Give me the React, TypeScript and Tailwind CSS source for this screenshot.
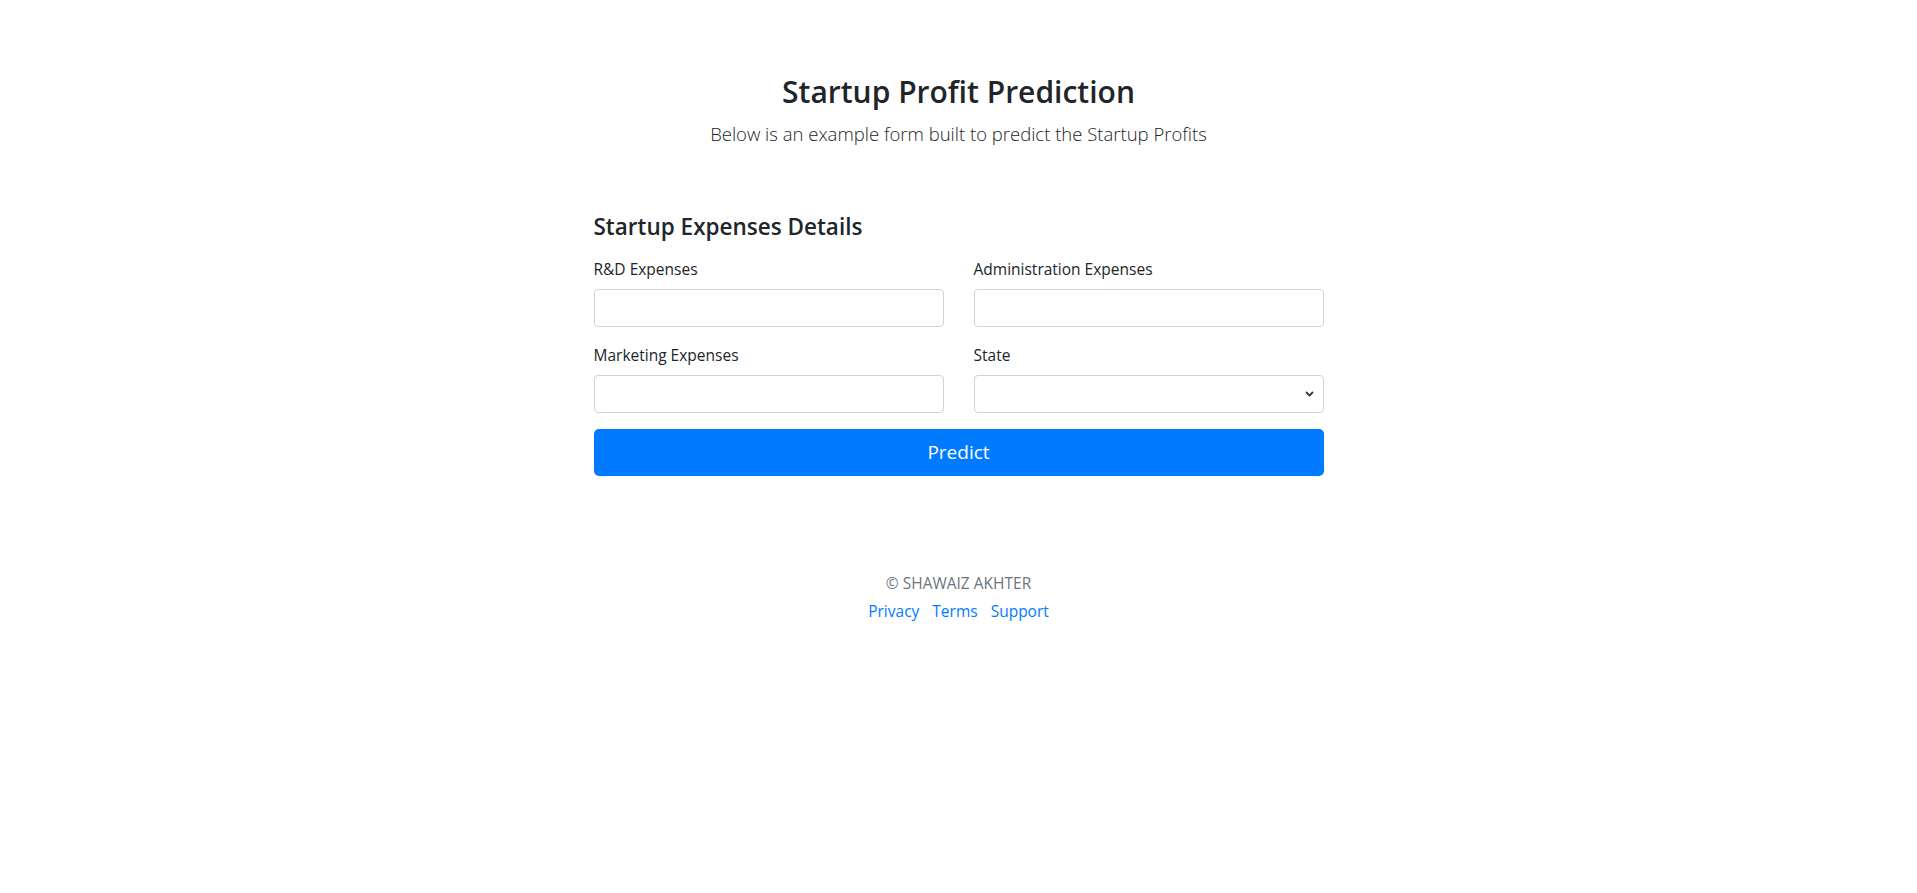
const fields = [
  { label: "R&D Expenses", type: "input" },
  { label: "Administration Expenses", type: "input" },
  { label: "Marketing Expenses", type: "input" },
  { label: "State", type: "select" },
];

function Field({ label, type }: { label: string; type: string }) {
  return (
    <div className="mb-4">
      <label className="mb-2 block text-[15.5px] leading-6 text-[#212529]">{label}</label>
      {type === "select" ? (
        <div className="relative">
          <select className="block h-[38px] w-full appearance-none rounded-[4px] border border-[#ced4da] bg-white px-3 text-[16px] text-[#495057]" />
          <svg className="pointer-events-none absolute right-[10px] top-1/2 h-[10px] w-[9px] -translate-y-1/2" viewBox="0 0 9 10">
            <path fill="none" stroke="#343a40" strokeWidth="1.8" strokeLinecap="round" strokeLinejoin="round" d="M1.5 3.5L4.5 6.5L7.5 3.5" />
          </svg>
        </div>
      ) : (
        <input className="block h-[38px] w-full rounded-[4px] border border-[#ced4da] bg-white px-3 text-[16px] text-[#495057] outline-none" />
      )}
    </div>
  );
}

export default function App() {
  return (
    <div className="min-h-screen bg-white font-['Open_Sans',sans-serif] text-[#212529]">
      {/* Header */}
      <div className="pt-[73px] text-center">
        <h2 className="mb-2 text-[30px] font-semibold leading-[38px]">Startup Profit Prediction</h2>
        <p className="text-[18.5px] font-light leading-[30px] text-[#212529]">
          Below is an example form built to predict the Startup Profits
        </p>
      </div>

      {/* Form */}
      <div className="mx-auto mt-[63px] w-[730px]">
        <h4 className="mb-4 text-[22.5px] font-semibold leading-[29px]">Startup Expenses Details</h4>
        <div className="grid grid-cols-2 gap-x-[30px]">
          {fields.map((f) => (
            <Field key={f.label} label={f.label} type={f.type} />
          ))}
        </div>
        <button className="block h-[47px] w-full rounded-[5px] bg-[#007bff] text-[19px] text-white">Predict</button>
      </div>

      {/* Footer */}
      <footer className="mt-[95px] text-center text-[15.5px] leading-6">
        <p className="mb-1 text-[#6c757d]">© SHAWAIZ AKHTER</p>
        <ul className="flex justify-center gap-[13px]">
          <li><a className="text-[#007bff]" href="#">Privacy</a></li>
          <li><a className="text-[#007bff]" href="#">Terms</a></li>
          <li><a className="text-[#007bff]" href="#">Support</a></li>
        </ul>
      </footer>
    </div>
  );
}
